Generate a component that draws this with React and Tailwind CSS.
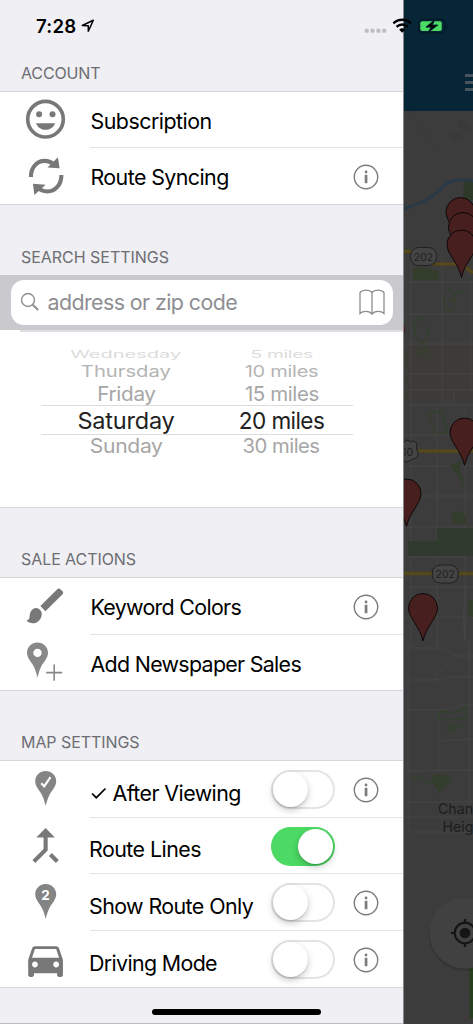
import React from "react";

const GRAY = "#787878";

function SectionTitle({ children, className }) {
  return (
    <div className={`flex items-end pl-[21px] pb-[8px] bg-[#efeff4] ${className}`}>
      <h2 className="text-[16px] leading-[20px] text-[#6d6d72] whitespace-nowrap">{children}</h2>
    </div>
  );
}

/* Row glyphs share a 90 x 56.5 canvas, the leading column of a row */
function Glyph({ children }) {
  return (
    <svg className="w-[90px] h-[56.5px] shrink-0" viewBox="0 0 90 56.5" fill={GRAY}>
      {children}
    </svg>
  );
}

function Smiley() {
  return (
    <Glyph>
      <circle cx="45.5" cy="27.2" r="17.8" fill="none" stroke={GRAY} strokeWidth="3.6" />
      <circle cx="39.1" cy="22.2" r="3" />
      <circle cx="52.5" cy="22.2" r="3" />
      <path d="M36 31.2h19.2c-1.6 4.2-5.2 6.6-9.6 6.6s-8-2.4-9.6-6.600z" />
    </Glyph>
  );
}

function Sync() {
  return (
    <Glyph>
      <path d="M30.900 28.900C30.900 18.600 37.500 12.900 44.500 12.900c4.500 0 7.500 1.500 10.200 4.300" fill="none" stroke={GRAY} strokeWidth="4.100" />
      <path d="M57.900 9.300 59.600 20.300 47.500 19.500z" />
      <path d="M61.400 27C61.400 37.600 54.500 43.500 47.500 43.500c-4.500 0-7.700-1.700-10.200-4.300" fill="none" stroke={GRAY} strokeWidth="4.100" />
      <path d="M33 35.800 45.600 36.800 34.400 47.100z" />
    </Glyph>
  );
}

function Brush() {
  return (
    <Glyph>
      <path d="M57.800 10.800q1.300-.7 2.400.3l2.500 2.500q1 1.200.1 2.400L45.400 33.200l-5-5.200z" />
      <path d="M38.700 30.700c2.400 1.400 3.300 3.600 3 6.200-.6 5.100-4.600 8.300-8.700 8.300-2.600 0-5.100-.9-6.400-2.700 2.200-.3 2.900-1.800 3.100-4.700.5-6 4.800-9.200 9-7.100z" />
    </Glyph>
  );
}

function PinPlus() {
  return (
    <Glyph>
      <path fillRule="evenodd" fill="#888" d="M37.500 7.500c5.800 0 10.500 4.500 10.500 10.300 0 5.200-4.500 9.200-7 14.200-1.700 3.400-2.600 7-3.500 10.700-.9-3.700-1.800-7.300-3.500-10.700-2.500-5-7-9-7-14.200 0-5.800 4.700-10.300 10.500-10.300zm0 6.200a4.200 4.200 0 1 0 0 8.400 4.200 4.200 0 1 0 0-8.400z" />
      <path d="M54.200 29.400v16.300M46.200 37.600h16" stroke="#888" strokeWidth="1.600" />
    </Glyph>
  );
}

const PIN = "M45.700 9.900c5.800 0 10.500 4.500 10.500 10.300 0 5.200-4.500 9.200-7 14.200-1.700 3.400-2.600 6.800-3.500 10.500-.9-3.700-1.800-7.100-3.500-10.500-2.500-5-7-9-7-14.200 0-5.800 4.700-10.300 10.500-10.300z";

function PinCheck() {
  return (
    <Glyph>
      <path d={PIN} fill="#848484" />
      <path d="M41.200 22.300l3 3 6.300-9.200" fill="none" stroke="#fff" strokeWidth="2.100" />
    </Glyph>
  );
}

function PinTwo() {
  return (
    <Glyph>
      <path d={PIN} fill="#848484" />
      <text x="45.600" y="25.500" textAnchor="middle" fill="#fff" fontSize="13.500" fontWeight="700" fontFamily="Inter, sans-serif">2</text>
    </Glyph>
  );
}

function Merge() {
  return (
    <Glyph>
      <g transform="translate(20.900 2.900) scale(2.060)">
        <path d="M17 20.410 18.410 19 15 15.590 13.590 17 17 20.410zM7.500 8H11v5.590L5.590 19 7 20.410l6-6V8h3.500L12 3.500 7.500 8z" />
      </g>
    </Glyph>
  );
}

function Car() {
  return (
    <Glyph>
      <g transform="translate(22.400 5.500) scale(1.930)">
        <path d="M18.920 6.010C18.720 5.420 18.160 5 17.500 5h-11c-.66 0-1.210.42-1.420 1.010L3 12v8c0 .55.45 1 1 1h1c.55 0 1-.45 1-1v-1h12v1c0 .55.45 1 1 1h1c.55 0 1-.45 1-1v-8l-2.080-5.990zM6.500 16c-.83 0-1.500-.67-1.500-1.500S5.670 13 6.500 13s1.500.67 1.500 1.500S7.330 16 6.500 16zm11 0c-.83 0-1.500-.67-1.500-1.500s.67-1.500 1.500-1.500 1.500.67 1.500 1.500-.67 1.500-1.500 1.500zM5 11l1.500-4.500h11L19 11H5z" />
      </g>
    </Glyph>
  );
}

function Info() {
  return (
    <svg className="w-[26px] h-[26px] shrink-0" viewBox="0 0 26 26">
      <circle cx="13" cy="13" r="11.700" fill="none" stroke="#7c7c7c" strokeWidth="1.400" />
      <rect x="11.700" y="10.800" width="2.700" height="8.400" fill="#7c7c7c" />
      <circle cx="13.050" cy="8" r="1.400" fill="#7c7c7c" />
    </svg>
  );
}

function Switch({ on }) {
  return (
    <span
      role="switch"
      aria-checked={on}
      className={`flex items-center w-[64px] h-[39px] rounded-full shrink-0 ${
        on ? "bg-[#4cd964] justify-end pr-[2px]" : "bg-white border-2 border-[#e4e4e4] justify-start"
      }`}
    >
      <span className="size-[35px] rounded-full bg-white shadow-[0_3px_7px_rgba(0,0,0,0.22),0_1px_1px_rgba(0,0,0,0.12)]" />
    </span>
  );
}

function Row({ icon, label, tracking, height, last, info, children, setting }) {
  return (
    <div className={`flex ${height}`}>
      {icon}
      <div className={`flex-1 flex items-center pr-[24.500px] ${last ? "" : "border-b border-[#e4e4e7]"}`}>
        <div className={`flex items-center whitespace-nowrap text-[21.400px] leading-[28px] text-black ${tracking} ${setting ? "pt-[8px] -ml-[1px]" : "ml-[0.500px] pt-[2px]"}`}>
          {label}
        </div>
        <div className={`ml-auto flex items-center pt-[2px] ${info ? "gap-[18px]" : "pr-[44px]"}`}>
          {children}
          {info && <Info />}
        </div>
      </div>
    </div>
  );
}

function Group({ children }) {
  return <div className="bg-white border-y border-[#d6d6da]">{children}</div>;
}

function PickerColumn({ items, className }) {
  const [a, b, c, d, e] = items;
  return (
    <div className={`flex flex-col items-center whitespace-nowrap ${className}`}>
      <div className="h-[16px] flex items-center text-[21.500px] text-[#dcdcdc]"><span className={a[1]}>{a[0]}</span></div>
      <div className="h-[19px] flex items-center text-[21.500px] text-[#b4b4b4]"><span className={b[1]}>{b[0]}</span></div>
      <div className="h-[26px] flex items-center text-[21.500px] text-[#a6a6a6]"><span className={c[1]}>{c[0]}</span></div>
      <div className="h-[28px] flex items-center text-[23.500px] text-[#222]"><span className={d[1]}>{d[0]}</span></div>
      <div className="h-[23px] flex items-center text-[21.500px] text-[#a6a6a6]"><span className={e[1]}>{e[0]}</span></div>
    </div>
  );
}

const MARKER = "M0 0c-1.500-7-4.500-12-8.500-18.500C-11.500-23.300-14.500-28-14.500-33a14.500 14.500 0 0 1 29 0c0 5-3 9.700-6 14.500C4.500-12 1.500-7 0 0z";

function Marker({ x, y }) {
  return <path d={MARKER} transform={`translate(${x} ${y})`} fill="#471f1e" stroke="#0d0707" strokeWidth="1" />;
}

function MapView() {
  return (
    <svg className="w-[69px] h-[913px] block" viewBox="404 111 69 913" fontFamily="Inter, 'Liberation Sans', sans-serif">
      <rect x="404" y="111" width="69" height="913" fill="#3c3c3c" />
      <rect x="404" y="346" width="69" height="55" fill="#3d3b37" />
      <path d="M411 111l24 38" stroke="#343b43" strokeWidth="0.800" />
      <g fill="#39393a">
        <path d="M449 136l10-3 4 4-8 3zM459 120l12 6-4 5-8-4z" />
      </g>
      <path d="M464 180h9v20h-10z" fill="#2e3a29" />
      <path d="M404 209c11-6 20-5 32-16 11-11 15-15 37-12" fill="none" stroke="#293947" strokeWidth="3" />
      <path d="M408 208c16-4 23-14 33-20" fill="none" stroke="#2c3944" strokeWidth="1" />
      <g fill="none" stroke="#454545" strokeWidth="1">
        <path d="M404 282h69M404 314h69M404 344h69M404 374h69M404 390h69M404 405h69M404 435h69M404 466h69M404 496h69M404 527h69M404 557h62M404 587h69M404 617h69M404 648h40l12 8h17" />
        <path d="M411 256v392M442 252v152M437 405v242M465 405v235M471 282v108M453 390q3 8 0 15M466 587l-3 30 3 30M408 640v185q0 7 6 7h59M438 640v8M454 656l-18 19v6M404 680h32l16-3h21M404 710h40l17-5h12M439 710v61M439 741l34-2M404 771l69-1M404 802h69M404 817h69M469 640v177" />
      </g>
      <g fill="#323d2c">
        <path d="M413 269q12-4 26 3v8h-26z" />
        <path d="M437 528h36v28h-36zM408 541h29v15h-29z" fill="#313a2f" />
        <path d="M451 513q8-4 15 3v8h-12zM469 600h4v17h-5z" />
        <path d="M432 776l6-2 5 1 7 2-5 8-5 9-6-9z" />
        <path d="M450 465l13-4-4 8 3 8 3 14-5-12z" />
      </g>
      <g fill="none" stroke="#33402d" strokeWidth="1.500">
        <path d="M445 286l10 7 10-2M444 299l11 1-2 12-8-2zM457 293l-4 5M414 322l6-5 5 9 4 7-8 11-5-6zM416 355l8-9 2 9zM429 413l14-2 1 9 3 12-10 2z" />
        <path d="M439 711l14 2 13-6v12l-26 1zM448 722l6 7-8 2M454 723v14M448 728l15-2" />
        <path d="M411 776h10l8 8 7-7 13-1 3 6-9 4-9-5M411 776q2 6 9 4" />
      </g>
      <path d="M469 968h4v50h-3z" fill="#26401f" />
      <g fill="none">
        <path d="M404 251.500h10M430 264h26q8 1 17 9M418 451h55M404 573.500h69" stroke="#4d421d" strokeWidth="4" />
        <path d="M404 251.500h6M437 264h19q8 1 17 9M418 451h55M404 573.500h69" stroke="#594c1f" strokeWidth="1.500" />
      </g>
      <g fontSize="10.500" textAnchor="middle" fill="#1f1f1f">
        <rect x="410.500" y="247.500" width="26" height="18" rx="8" fill="#444" stroke="#202020" />
        <text x="423.500" y="260.500">202</text>
        <rect x="432.300" y="565" width="26" height="18" rx="8" fill="#444" stroke="#202020" />
        <text x="445.300" y="578">202</text>
        <path d="M400 442q4 2 7-2 4 3 7 1l3 3q-2 4 1 8 1 6-5 7l-6 3-7-3z" fill="#444" stroke="#202020" />
        <text x="406.500" y="455.500">60</text>
      </g>
      <Marker x="460.500" y="245" />
      <Marker x="463" y="260" />
      <Marker x="461.500" y="277.500" />
      <Marker x="464.500" y="465.500" />
      <Marker x="406.500" y="526.500" />
      <Marker x="423" y="641" />
      <path d="M404 324q2 5 0 11z" fill="#4b1a1a" />
      <g fontSize="14.200" fill="#1c1c1c">
        <text x="438" y="814">Chan</text>
        <text x="442.500" y="831.500">Heig</text>
      </g>
      <circle cx="465" cy="935" r="36" fill="#262626" opacity="0.350" />
      <circle cx="465" cy="933" r="35.500" fill="#414141" />
      <circle cx="465" cy="933" r="10.300" fill="none" stroke="#151515" strokeWidth="2.200" />
      <circle cx="465" cy="933" r="5.300" fill="#151515" />
      <path d="M465 919v4M465 943v4M451 933h4M475 933h4" stroke="#151515" strokeWidth="2.200" />
    </svg>
  );
}

function StatusBar() {
  return (
    <header className="absolute inset-x-0 top-0 h-[48px] flex items-center pl-[36px] pt-[3px]">
      <span className="text-[18.600px] leading-[24px] font-semibold tracking-[0.200px]">7:28</span>
      <svg className="w-[14px] h-[14px] ml-[5px]" viewBox="0 0 14 14">
        <path d="M1.300 6.500 12.300 1.300 7.300 12.300V6.700z" fill="none" stroke="#000" strokeWidth="1.500" strokeLinejoin="round" />
      </svg>
      <svg className="w-[109px] h-[24px] ml-auto" viewBox="364 13.500 109 24">
        <g fill="#bdbdc2">
          <rect x="364.700" y="28.300" width="4" height="4" rx="1.300" />
          <rect x="370.500" y="28.300" width="4" height="4" rx="1.300" />
          <rect x="376.400" y="28.300" width="4" height="4" rx="1.300" />
          <rect x="382.200" y="28.300" width="4" height="4" rx="1.300" />
        </g>
        <g fill="none" stroke="#000" strokeWidth="2.400">
          <path d="M393.400 22.800a12.800 12.800 0 0 1 17.600 0" />
          <path d="M396.600 26.300a8 8 0 0 1 11.200 0" />
        </g>
        <path d="M399.200 29.200a4.400 4.400 0 0 1 6 0l-3 3z" fill="#000" />
        <rect x="418.800" y="18.800" width="26.400" height="13.500" rx="4" fill="#062637" stroke="#041a27" strokeWidth="1.200" />
        <path d="M447 23.500v4.500q1.500-.8 1.500-2.250t-1.500-2.250z" fill="#041a27" />
        <rect x="420.300" y="20.800" width="21.500" height="9.600" rx="2" fill="#4cd964" />
        <path d="M434.500 19.500 426 26.600h5.300L428 32l9.800-7.400h-5.400z" fill="#000" stroke="#04202c" strokeWidth="1" />
      </svg>
    </header>
  );
}

export default function App() {
  return (
    <div className="relative flex w-[473px] h-[1024px] overflow-hidden bg-[#3c3c3c] font-['Inter','Liberation_Sans',sans-serif]">
      <main className="w-[403px] shrink-0 flex flex-col bg-[#efeff4]">
        <SectionTitle className="h-[91px] tracking-[-0.150px]">ACCOUNT</SectionTitle>
        <Group>
          <Row height="h-[56px]" icon={<Smiley />} label="Subscription" tracking="tracking-[-0.520px]" />
          <Row height="h-[56px]" icon={<Sync />} label="Route Syncing" tracking="tracking-[-0.580px]" info last />
        </Group>
        <SectionTitle className="h-[70px] tracking-[-0.030px]">SEARCH SETTINGS</SectionTitle>

        <div className="h-[55px] bg-[#c9c9ce] pl-[10.500px] pr-[10px] pt-[5px] pb-[5px]">
          <div className="h-[45px] rounded-[13px] bg-white flex items-center pl-[9px] pr-[7.500px] pb-[2px]">
            <svg className="w-[20px] h-[20px]" viewBox="0 0 20 20" fill="none" stroke="#8e8e93">
              <circle cx="8" cy="8" r="6.500" strokeWidth="1.400" />
              <path d="M12.700 12.700 18.200 18" strokeWidth="2" />
            </svg>
            <span className="ml-[8px] text-[21.400px] leading-[28px] text-[#8e8e93] whitespace-nowrap tracking-[-0.580px]">address or zip code</span>
            <svg className="w-[28px] h-[28px] ml-auto" viewBox="0 0 28 28" fill="none" stroke="#8e8e93" strokeWidth="1.300">
              <path d="M14 4.500C11.500 1.200 4.500 1.200 2 4.500v21c3-3 9.500-3 12 .5 2.500-3.500 9-3.500 12-.5v-21C23.500 1.200 16.500 1.200 14 4.500zM14 4.500v22" />
            </svg>
          </div>
        </div>
        <div className="h-[178px] bg-white border-b border-[#d6d6da]">
          <div className="h-[2px] ml-[20px] bg-[#e0e0e3]" />
          <div className="relative h-[113px] mt-[14px]">
            <div className="absolute left-[41px] top-[59px] w-[312px] h-[30px] border-y border-[#dcdcdc]" />
            <div className="relative flex">
              <PickerColumn
                className="w-[252px]"
                items={[
                  ["Wednesday", "block scale-x-[0.930] scale-y-[0.500]"],
                  ["Thursday", "block scale-x-[0.940] scale-y-[0.760]"],
                  ["Friday", "block tracking-[-0.300px] scale-x-[0.960] scale-y-[0.930]"],
                  ["Saturday", "block tracking-[-0.200px]"],
                  ["Sunday", "block tracking-[-0.300px] scale-x-[0.980] scale-y-[0.930]"],
                ]}
              />
              <PickerColumn
                className="w-[59px]"
                items={[
                  ["5 miles", "block tracking-[-0.400px] scale-x-[0.900] scale-y-[0.500]"],
                  ["10 miles", "block tracking-[-0.300px] scale-x-[0.930] scale-y-[0.760]"],
                  ["15 miles", "block tracking-[-0.400px] scale-x-[0.950] scale-y-[0.930]"],
                  ["20 miles", "block tracking-[-0.600px] scale-x-[0.960]"],
                  ["30 miles", "block tracking-[-0.500px] scale-x-[0.940] scale-y-[0.930]"],
                ]}
              />
            </div>
          </div>
        </div>

        <SectionTitle className="h-[69px] tracking-[-0.070px]">SALE ACTIONS</SectionTitle>
        <Group>
          <Row height="h-[57px]" icon={<Brush />} label="Keyword Colors" tracking="tracking-[-0.690px]" info />
          <Row height="h-[55px]" icon={<PinPlus />} label="Add Newspaper Sales" tracking="tracking-[-0.690px]" last />
        </Group>
        <SectionTitle className="h-[69px] tracking-[-0.070px]">MAP SETTINGS</SectionTitle>
        <Group>
          <Row
            height="h-[56.5px]"
            icon={<PinCheck />}
            tracking="tracking-[-0.570px]"
            setting
            info
            label={
              <>
                <svg className="w-[16px] h-[14px] ml-[1.500px] mr-[6px]" viewBox="0 0 16 14" fill="none" stroke="#000" strokeWidth="1.700">
                  <path d="M1 7.500 5.300 11.700 14.500 2.500" />
                </svg>
                After Viewing
              </>
            }
          >
            <Switch on={false} />
          </Row>
          <Row height="h-[56.5px]" icon={<Merge />} label="Route Lines" tracking="tracking-[-0.540px]" setting>
            <Switch on={true} />
          </Row>
          <Row height="h-[56.5px]" icon={<PinTwo />} label="Show Route Only" tracking="tracking-[-0.580px]" setting info>
            <Switch on={false} />
          </Row>
          <Row height="h-[56.5px]" icon={<Car />} label="Driving Mode" tracking="tracking-[-0.650px]" setting info last>
            <Switch on={false} />
          </Row>
        </Group>
        <div className="flex-1 border-b border-[#bdbdc2]" />
      </main>

      <aside className="w-[70px] shrink-0 flex flex-col border-l border-[#85898c]">
        <div className="h-[111px] flex items-center justify-end bg-[#062637] pt-[54px]">
          <div className="flex flex-col gap-[4px]">
            <span className="w-[8px] h-[3px] bg-[#49555c]" />
            <span className="w-[8px] h-[3px] bg-[#49555c]" />
            <span className="w-[8px] h-[3px] bg-[#49555c]" />
          </div>
        </div>
        <MapView />
      </aside>

      <StatusBar />
      <div className="absolute left-[152px] bottom-[9px] w-[169px] h-[6px] rounded-full bg-black" />
    </div>
  );
}
